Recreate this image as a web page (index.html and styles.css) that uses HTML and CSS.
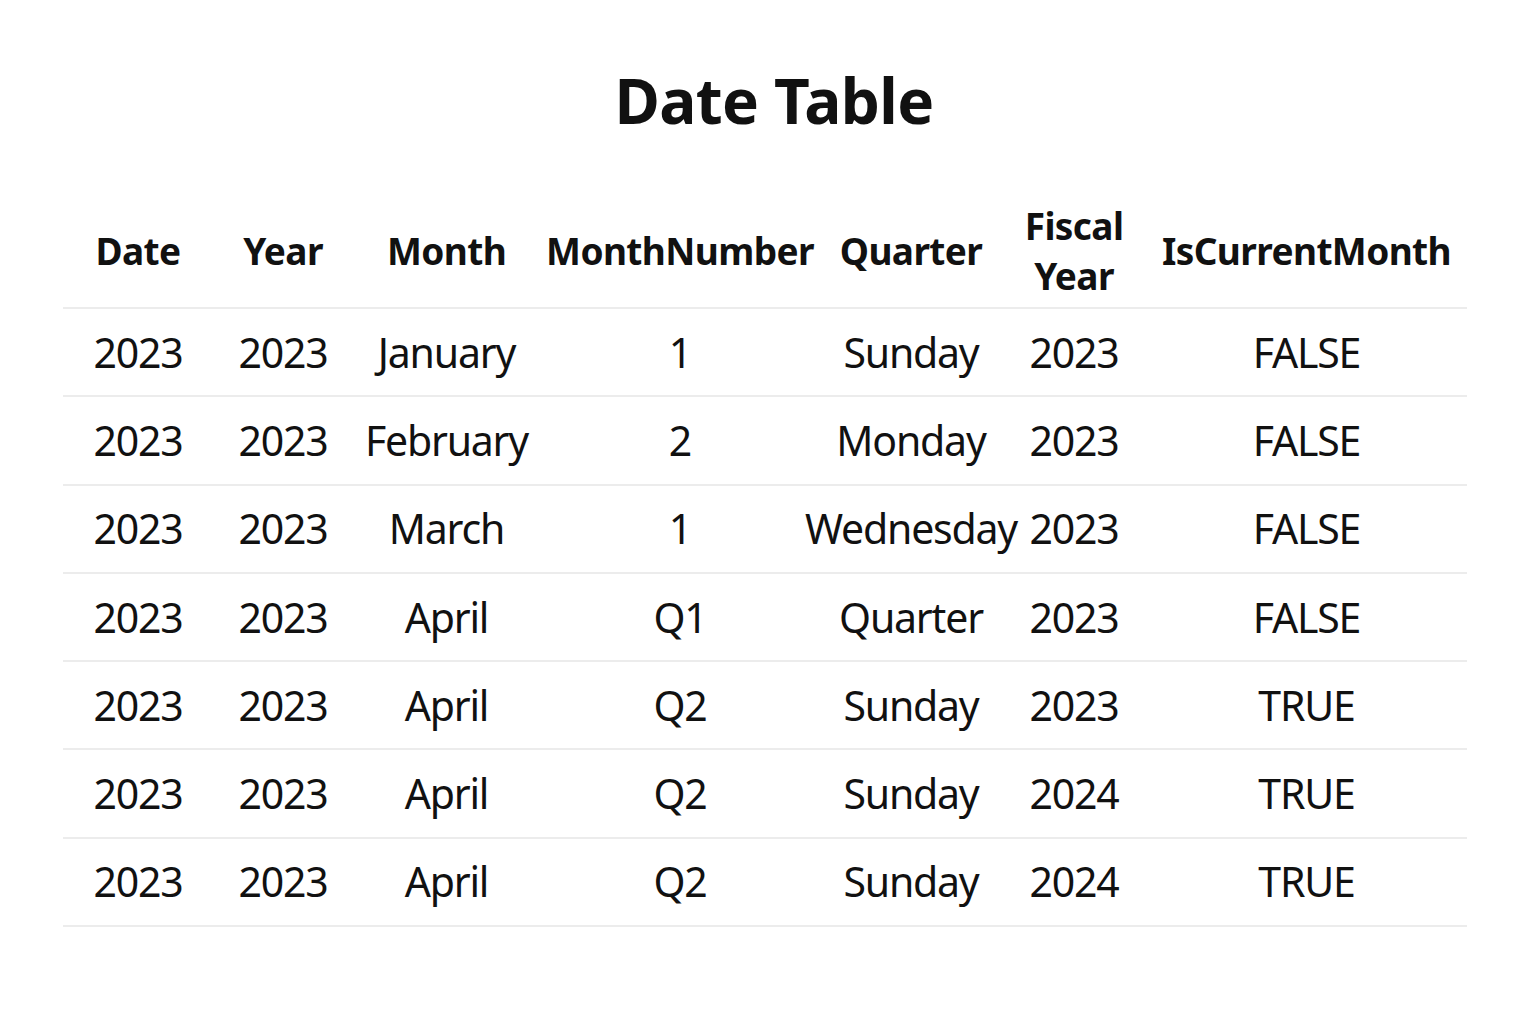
FILE: index.html
```html
<!DOCTYPE html>
<html lang="en">
<head>
<meta charset="utf-8">
<title>Date Table</title>
<link rel="stylesheet" href="styles.css">
</head>
<body>
<main class="page">
  <h1 class="title">Date Table</h1>
  <div class="table">
    <div class="row head">
      <div class="cell">Date</div>
      <div class="cell">Year</div>
      <div class="cell">Month</div>
      <div class="cell">MonthNumber</div>
      <div class="cell">Quarter</div>
      <div class="cell fiscal"><span class="line">Fiscal</span><span class="line">Year</span></div>
      <div class="cell">IsCurrentMonth</div>
    </div>
    <div class="row">
      <div class="cell">2023</div><div class="cell">2023</div><div class="cell">January</div><div class="cell">1</div><div class="cell">Sunday</div><div class="cell">2023</div><div class="cell">FALSE</div>
    </div>
    <div class="row">
      <div class="cell">2023</div><div class="cell">2023</div><div class="cell">February</div><div class="cell">2</div><div class="cell">Monday</div><div class="cell">2023</div><div class="cell">FALSE</div>
    </div>
    <div class="row">
      <div class="cell">2023</div><div class="cell">2023</div><div class="cell">March</div><div class="cell">1</div><div class="cell">Wednesday</div><div class="cell">2023</div><div class="cell">FALSE</div>
    </div>
    <div class="row">
      <div class="cell">2023</div><div class="cell">2023</div><div class="cell">April</div><div class="cell">Q1</div><div class="cell">Quarter</div><div class="cell">2023</div><div class="cell">FALSE</div>
    </div>
    <div class="row">
      <div class="cell">2023</div><div class="cell">2023</div><div class="cell">April</div><div class="cell">Q2</div><div class="cell">Sunday</div><div class="cell">2023</div><div class="cell">TRUE</div>
    </div>
    <div class="row">
      <div class="cell">2023</div><div class="cell">2023</div><div class="cell">April</div><div class="cell">Q2</div><div class="cell">Sunday</div><div class="cell">2024</div><div class="cell">TRUE</div>
    </div>
    <div class="row">
      <div class="cell">2023</div><div class="cell">2023</div><div class="cell">April</div><div class="cell">Q2</div><div class="cell">Sunday</div><div class="cell">2024</div><div class="cell">TRUE</div>
    </div>
  </div>
</main>
</body>
</html>
```

FILE: styles.css
```css
html, body {
  margin: 0;
  padding: 0;
  background: #ffffff;
}

body {
  font-family: "Noto Sans", "Open Sans", sans-serif;
  color: #111111;
}

.page {
  width: 1404px;
  margin-left: 63px;
  padding-top: 63px;
}

.title {
  margin: 0 0 57px 0;
  height: 74px;
  font-size: 62px;
  line-height: 74px;
  font-weight: 700;
  text-align: center;
  letter-spacing: -0.6px;
  padding-left: 18px;
}

.table {
  display: flex;
  flex-direction: column;
}

.row {
  display: grid;
  grid-template-columns: 150px 140px 187px 280px 182px 144px 321px;
  align-items: center;
  height: 88.3px;
  box-sizing: border-box;
  border-bottom: 2px solid #ececec;
  font-size: 41px;
  letter-spacing: -1.2px;
}

.row.head {
  height: 115px;
  font-size: 37px;
  font-weight: 700;
  letter-spacing: -0.6px;
}

.cell {
  display: flex;
  justify-content: center;
  text-align: center;
  white-space: nowrap;
  line-height: 1;
  min-width: 0;
}

.fiscal {
  flex-direction: column;
  align-items: center;
}

.line {
  display: block;
  line-height: 50px;
}
```
